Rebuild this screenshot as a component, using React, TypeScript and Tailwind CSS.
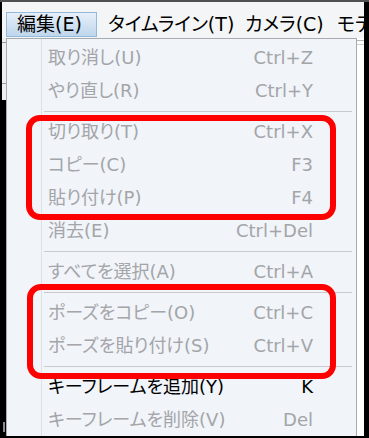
import React from "react";

type Entry =
  | { kind: "item"; label: string; key: string; enabled?: boolean }
  | { kind: "sep" };

const entries: Entry[] = [
  { kind: "item", label: "取り消し(U)", key: "Ctrl+Z" },
  { kind: "item", label: "やり直し(R)", key: "Ctrl+Y" },
  { kind: "sep" },
  { kind: "item", label: "切り取り(T)", key: "Ctrl+X" },
  { kind: "item", label: "コピー(C)", key: "F3" },
  { kind: "item", label: "貼り付け(P)", key: "F4" },
  { kind: "item", label: "消去(E)", key: "Ctrl+Del" },
  { kind: "sep" },
  { kind: "item", label: "すべてを選択(A)", key: "Ctrl+A" },
  { kind: "sep" },
  { kind: "item", label: "ポーズをコピー(O)", key: "Ctrl+C" },
  { kind: "item", label: "ポーズを貼り付け(S)", key: "Ctrl+V" },
  { kind: "sep" },
  { kind: "item", label: "キーフレームを追加(Y)", key: "K", enabled: true },
  { kind: "item", label: "キーフレームを削除(V)", key: "Del" },
];

const MenuRow = ({ entry }: { entry: Entry }) => {
  if (entry.kind === "sep") {
    return (
      <div className="flex h-[8px] items-center pl-[2px] pr-[4px]">
        <div className="h-px w-full bg-[#c9cacb]" />
      </div>
    );
  }
  const color = entry.enabled ? "text-black" : "text-[#a3a5a8]";
  return (
    <div className={`flex h-[33px] items-center justify-between pl-[6px] pr-[43px] ${color}`}>
      <span>{entry.label}</span>
      <span>{entry.key}</span>
    </div>
  );
};

const App = () => {
  const bar = ["タイムライン(T)", "カメラ(C)", "モデル(M)"];
  const widths = ["w-[137px]", "w-[92px]", "w-[60px]"];

  return (
    <div
      className="relative h-[438px] w-[369px] overflow-hidden border-t-2 border-t-[#505050] bg-black pb-[2px] pl-[2px] pr-[5px] text-[18px] [font-feature-settings:'palt']"
      style={{ fontFamily: '"DejaVu Sans", "Noto Sans CJK JP", sans-serif' }}
    >
      <div className="flex h-full flex-col bg-[#f0f0f0]">
        {/* menu bar */}
        <div className="flex h-[36px] shrink-0 items-end overflow-hidden whitespace-nowrap bg-[#f4f5f6] pb-[1px] pl-[4px] text-[19px]">
          <div className="flex h-[25px] w-[91px] shrink-0 items-center border border-[#93b9dd] bg-linear-to-b from-[#e6eff9] to-[#bfd6ec] pl-[10px] text-black">
            編集(E)
          </div>
          {bar.map((b, i) => (
            <div key={b} className={`flex h-[25px] shrink-0 items-center pl-[11px] text-black ${widths[i]}`}>
              {b}
            </div>
          ))}
        </div>

        <div className="flex min-h-0 flex-1">
          {/* window behind, left edge */}
          <div className="flex w-[4px] flex-col">
            <div className="flex h-[62px] flex-col gap-[40px] bg-[#eeeeee] pt-[4px]">
              <div className="h-px bg-[#9a9a9a]" />
              <div className="h-px bg-[#9a9a9a]" />
            </div>
            <div className="flex flex-1 flex-col justify-end bg-black pb-[4px]">
              <div className="ml-[1px] h-[10px] w-[2px] bg-[#8a8a8a]" />
            </div>
          </div>

          {/* drop-down */}
          <div className="flex w-[351px] border-l border-r border-t border-[#a7abb0] bg-[#f1f4f9]">
            <div className="w-[35px] shrink-0 border-r border-[#dde1e6]" />
            <div className="flex-1 whitespace-nowrap pt-[2px]">
              {entries.map((e, i) => (
                <MenuRow key={i} entry={e} />
              ))}
            </div>
          </div>

          {/* window behind, right edge */}
          <div className="flex flex-1 flex-col bg-white pt-[2px]">
            <div className="h-px bg-[#b5b5b5]" />
            <div className="mt-[3px] h-px bg-[#d0d0d0]" />
          </div>
        </div>
      </div>

      {/* annotation boxes */}
      <div className="absolute left-[26px] top-[113px] h-[105px] w-[310px] rounded-[14px] border-[6px] border-[#ff0000]" />
      <div className="absolute left-[27px] top-[282px] h-[95px] w-[309px] rounded-[14px] border-[6px] border-[#ff0000]" />
    </div>
  );
};

export default App;
